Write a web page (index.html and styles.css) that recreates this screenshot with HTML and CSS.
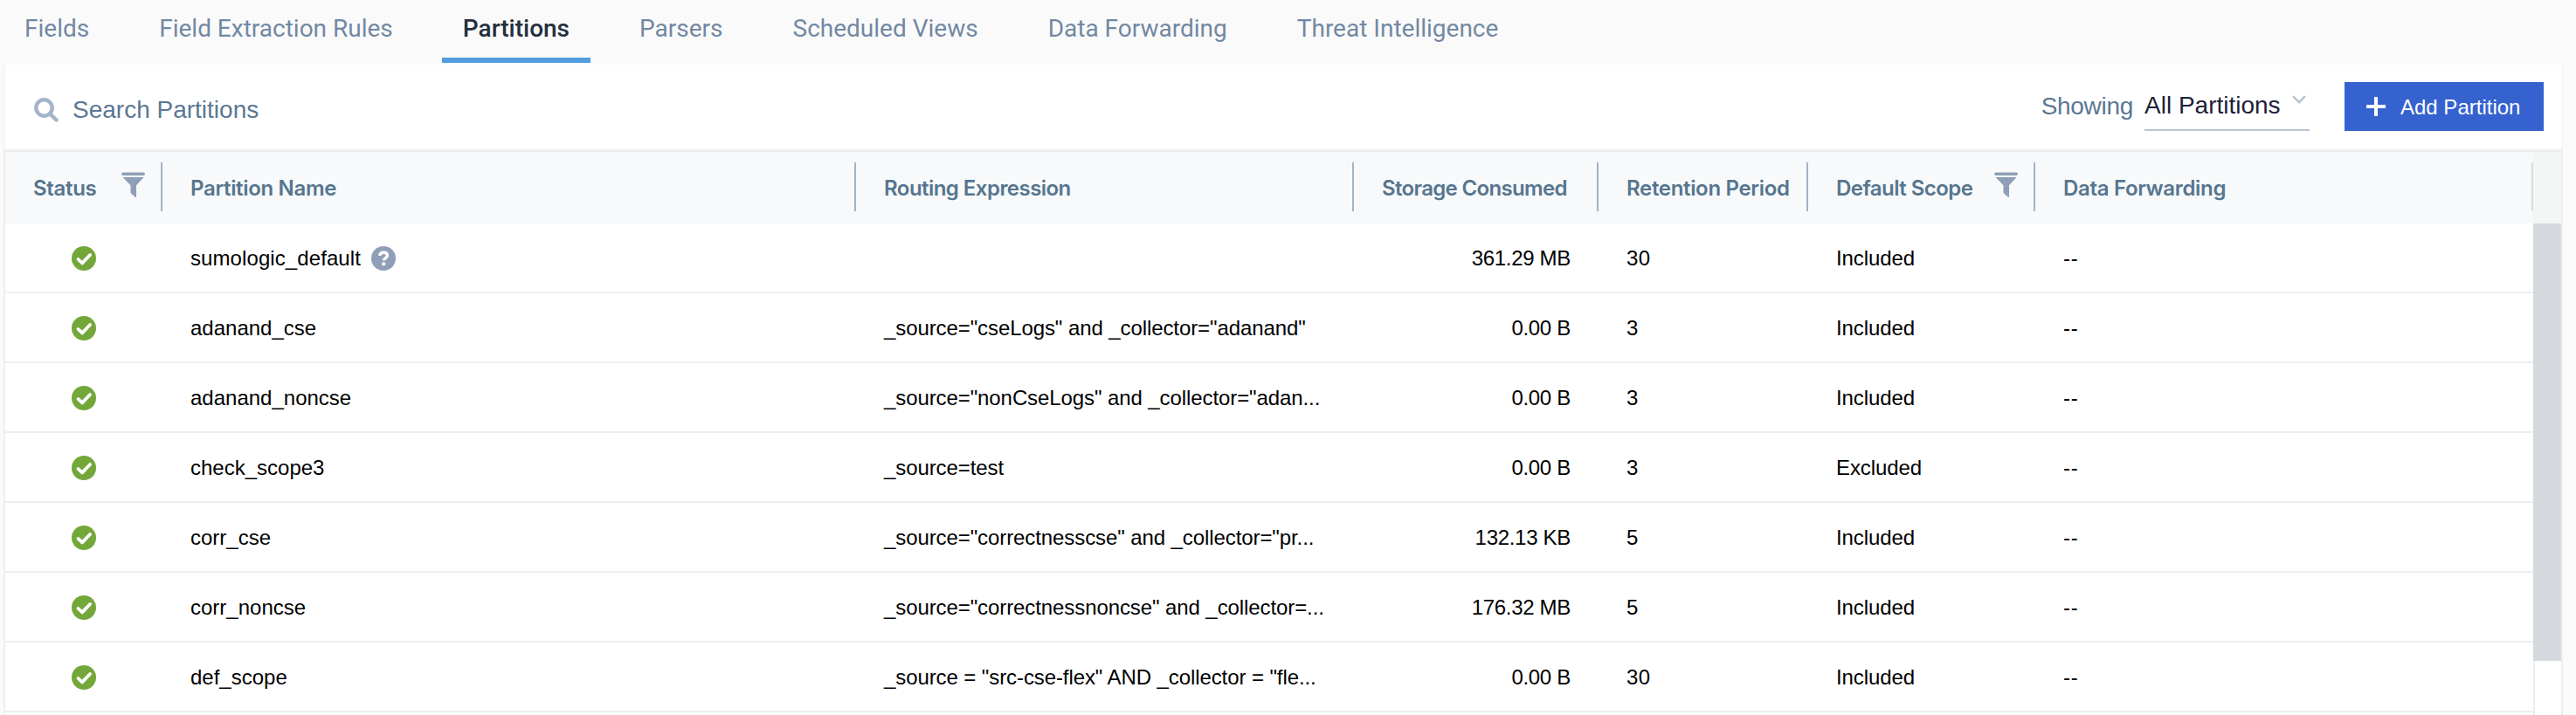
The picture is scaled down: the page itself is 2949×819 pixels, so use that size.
FILE: index.html
```
<!DOCTYPE html>
<html lang="en">
<head>
<meta charset="utf-8">
<title>Partitions</title>
<link rel="stylesheet" href="styles.css">
</head>
<body>
<svg class="defs" width="0" height="0">
  <symbol id="check" viewBox="0 0 28 28"><circle cx="14" cy="14" r="14" fill="#74a73a"/><path d="M7.5 15l4.6 4.4 9-9.4" fill="none" stroke="#fff" stroke-width="3.8" stroke-linecap="round" stroke-linejoin="round"/></symbol>
  <symbol id="funnel" viewBox="0 0 28 30"><rect x="0" y="0.5" width="27" height="3.6" rx="1.8" fill="#8f9fb7"/><path d="M1.500 6h24.200L17 15.200V29l-1.500-.4-5-4.600V15.200z" fill="#8f9fb7"/></symbol>
</svg>
<nav class="tabs">
  <a class="tab">Fields</a>
  <a class="tab">Field Extraction Rules</a>
  <a class="tab active">Partitions</a>
  <a class="tab">Parsers</a>
  <a class="tab">Scheduled Views</a>
  <a class="tab">Data Forwarding</a>
  <a class="tab">Threat Intelligence</a>
</nav>
<main class="panel">
  <div class="toolbar">
    <div class="search">
      <svg width="28" height="28" viewBox="0 0 28 28"><circle cx="11.500" cy="11.500" r="9.200" fill="none" stroke="#a4b5c9" stroke-width="4.400"/><path d="M18.500 18.500l7 7" stroke="#a4b5c9" stroke-width="4.500" stroke-linecap="round"/></svg>
      <span class="placeholder">Search Partitions</span>
    </div>
    <span class="showing">Showing</span>
    <div class="select">
      <span>All Partitions</span>
      <svg width="16" height="10" viewBox="0 0 16 10"><path d="M1 1.200l7 7 7-7" fill="none" stroke="#b4c3d2" stroke-width="2.400"/></svg>
    </div>
    <button class="add">
      <svg width="22" height="22" viewBox="0 0 22 22"><path d="M11 0v22M0 11h22" stroke="#fff" stroke-width="4"/></svg>
      <span>Add Partition</span>
    </button>
  </div>
  <div class="table">
    <div class="row head">
      <div class="cell h-status"><span>Status</span><svg class="funnel" width="28" height="30"><use href="#funnel"/></svg></div>
      <div class="cell">Partition Name</div>
      <div class="cell tight">Routing Expression</div>
      <div class="cell tighter">Storage Consumed</div>
      <div class="cell">Retention Period</div>
      <div class="cell tight h-scope"><span>Default Scope</span><svg class="funnel" width="28" height="30"><use href="#funnel"/></svg></div>
      <div class="cell last">Data Forwarding</div>
      <div class="corner"></div>
    </div>
    <div class="content">
      <div class="rows">
        <div class="row"><div class="cell status"><svg width="28" height="28"><use href="#check"/></svg></div><div class="cell name"><span>sumologic_default</span><svg class="help" width="28" height="28" viewBox="0 0 28 28"><circle cx="14" cy="14" r="14" fill="#8f9fb7"/><path d="M9.800 10.800C10 8.500 11.700 7.300 14.200 7.300c2.500 0 4.200 1.300 4.200 3.400 0 2.900-4 2.900-4 5.600" fill="none" stroke="#fff" stroke-width="3.400"/><circle cx="14.200" cy="20.300" r="2.100" fill="#fff"/></svg></div><div class="cell expr"></div><div class="cell size">361.29 MB</div><div class="cell num">30</div><div class="cell scope">Included</div><div class="cell fwd">--</div></div>
        <div class="row"><div class="cell status"><svg width="28" height="28"><use href="#check"/></svg></div><div class="cell name">adanand_cse</div><div class="cell expr">_source="cseLogs" and _collector="adanand"</div><div class="cell size">0.00 B</div><div class="cell num">3</div><div class="cell scope">Included</div><div class="cell fwd">--</div></div>
        <div class="row"><div class="cell status"><svg width="28" height="28"><use href="#check"/></svg></div><div class="cell name">adanand_noncse</div><div class="cell expr">_source="nonCseLogs" and _collector="adan...</div><div class="cell size">0.00 B</div><div class="cell num">3</div><div class="cell scope">Included</div><div class="cell fwd">--</div></div>
        <div class="row"><div class="cell status"><svg width="28" height="28"><use href="#check"/></svg></div><div class="cell name">check_scope3</div><div class="cell expr">_source=test</div><div class="cell size">0.00 B</div><div class="cell num">3</div><div class="cell scope">Excluded</div><div class="cell fwd">--</div></div>
        <div class="row"><div class="cell status"><svg width="28" height="28"><use href="#check"/></svg></div><div class="cell name">corr_cse</div><div class="cell expr">_source="correctnesscse" and _collector="pr...</div><div class="cell size">132.13 KB</div><div class="cell num">5</div><div class="cell scope">Included</div><div class="cell fwd">--</div></div>
        <div class="row"><div class="cell status"><svg width="28" height="28"><use href="#check"/></svg></div><div class="cell name">corr_noncse</div><div class="cell expr">_source="correctnessnoncse" and _collector=...</div><div class="cell size">176.32 MB</div><div class="cell num">5</div><div class="cell scope">Included</div><div class="cell fwd">--</div></div>
        <div class="row"><div class="cell status"><svg width="28" height="28"><use href="#check"/></svg></div><div class="cell name">def_scope</div><div class="cell expr">_source = "src-cse-flex" AND _collector = "fle...</div><div class="cell size">0.00 B</div><div class="cell num">30</div><div class="cell scope">Included</div><div class="cell fwd">--</div></div>
      </div>
      <div class="track"><div class="thumb"></div></div>
    </div>
  </div>
</main>
</body>
</html>
```
FILE: styles.css
```
* { box-sizing: border-box; }
html, body { height: 100%; }
body {
  margin: 0;
  background: #fafafa;
  color: #000;
  font: 24px "Liberation Sans", Arial, sans-serif;
  overflow: hidden;
  display: flex;
  flex-direction: column;
}
svg { display: block; flex: none; }
.defs { position: absolute; }

.tabs {
  display: flex;
  gap: 32px;
  height: 74px;
  padding-left: 4px;
  flex: none;
  font: 28px Roboto, sans-serif;
  color: #7288a3;
}
.tab {
  height: 72px;
  padding: 0 24px;
  line-height: 66px;
  white-space: nowrap;
  border-bottom: 6px solid transparent;
}
.tab.active { color: #232f3e; font-weight: 500; border-bottom-color: #529ee0; }

.panel { flex: 1; margin: 0 15px 0 4px; display: flex; flex-direction: column; min-height: 0; }
.toolbar {
  flex: none;
  height: 96px;
  display: flex;
  align-items: center;
  padding-right: 20px;
  background: #fff;
  border: solid #f6f7f8;
  border-width: 0 2px;
  font-size: 28px;
  color: #5b7792;
}
.search { flex: 1; display: flex; align-items: center; gap: 16px; padding: 7px 0 0 33px; }
.showing { letter-spacing: -0.3px; padding-right: 13px; }
.select {
  width: 189px;
  height: 56px;
  display: flex;
  justify-content: space-between;
  align-items: center;
  padding-right: 4px;
  color: #1b2238;
  border-bottom: 2px solid #b7c5d5;
}
.select svg { margin-bottom: 14px; }
.add {
  width: 228px;
  height: 56px;
  margin-left: 40px;
  padding: 0 0 0 25px;
  border: 0;
  background: #3662d0;
  color: #fff;
  font: 24px "Liberation Sans", Arial, sans-serif;
  display: flex;
  align-items: center;
  gap: 17px;
}
.add span { padding-top: 2px; }

.table {
  flex: 1;
  min-height: 0;
  border: solid #ebeff2;
  border-width: 0 2px;
  display: flex;
  flex-direction: column;
  background: #fff;
}
.row {
  display: grid;
  grid-template-columns: 180px 794px 570px 280px 240px 260px 570px;
  height: 80px;
  border-bottom: 2px solid #ebeff2;
}
.cell { display: flex; align-items: center; padding: 2px 0 0 32px; white-space: nowrap; }
.head {
  flex: none;
  grid-template-columns: 180px 794px 570px 280px 240px 260px 570px 32px;
  height: 86px;
  border: 0;
  background: #f7f9fa;
  box-shadow: inset 0 2px #f5f7f9, inset 0 4px #ebeef1;
  color: #56758f;
  font: 600 24px Inter, sans-serif;
  letter-spacing: -0.33px;
}
.head .cell {
  height: 56px;
  margin-top: 16px;
  padding-top: 2px;
  border-right: 2px solid #a2b3c6;
}
.head .tight { letter-spacing: -0.54px; }
.head .tighter { letter-spacing: -0.66px; }
.head .last { border-right-color: #d9dbdd; }
.corner { margin-top: 4px; background: #f4f6f6; }
.funnel { margin-bottom: 6px; }
.h-status { gap: 29px; }
.h-scope { gap: 25px; }

.content { flex: 1; display: flex; min-height: 0; overflow: hidden; }
.rows { width: 2894px; flex: none; }
.status { padding-left: 76px; }
.name span { letter-spacing: 0.09px; }
.name { gap: 12px; }
.expr { letter-spacing: -0.09px; }
.size { justify-content: flex-end; padding-right: 32px; letter-spacing: -0.3px; }
.num { letter-spacing: 0.5px; }
.scope { letter-spacing: -0.1px; }
.fwd { letter-spacing: 0.8px; }
.track { width: 32px; border-left: 2px solid #ebeff2; }
.thumb { height: 501px; margin-left: -2px; background: #d5d9de; }
```
